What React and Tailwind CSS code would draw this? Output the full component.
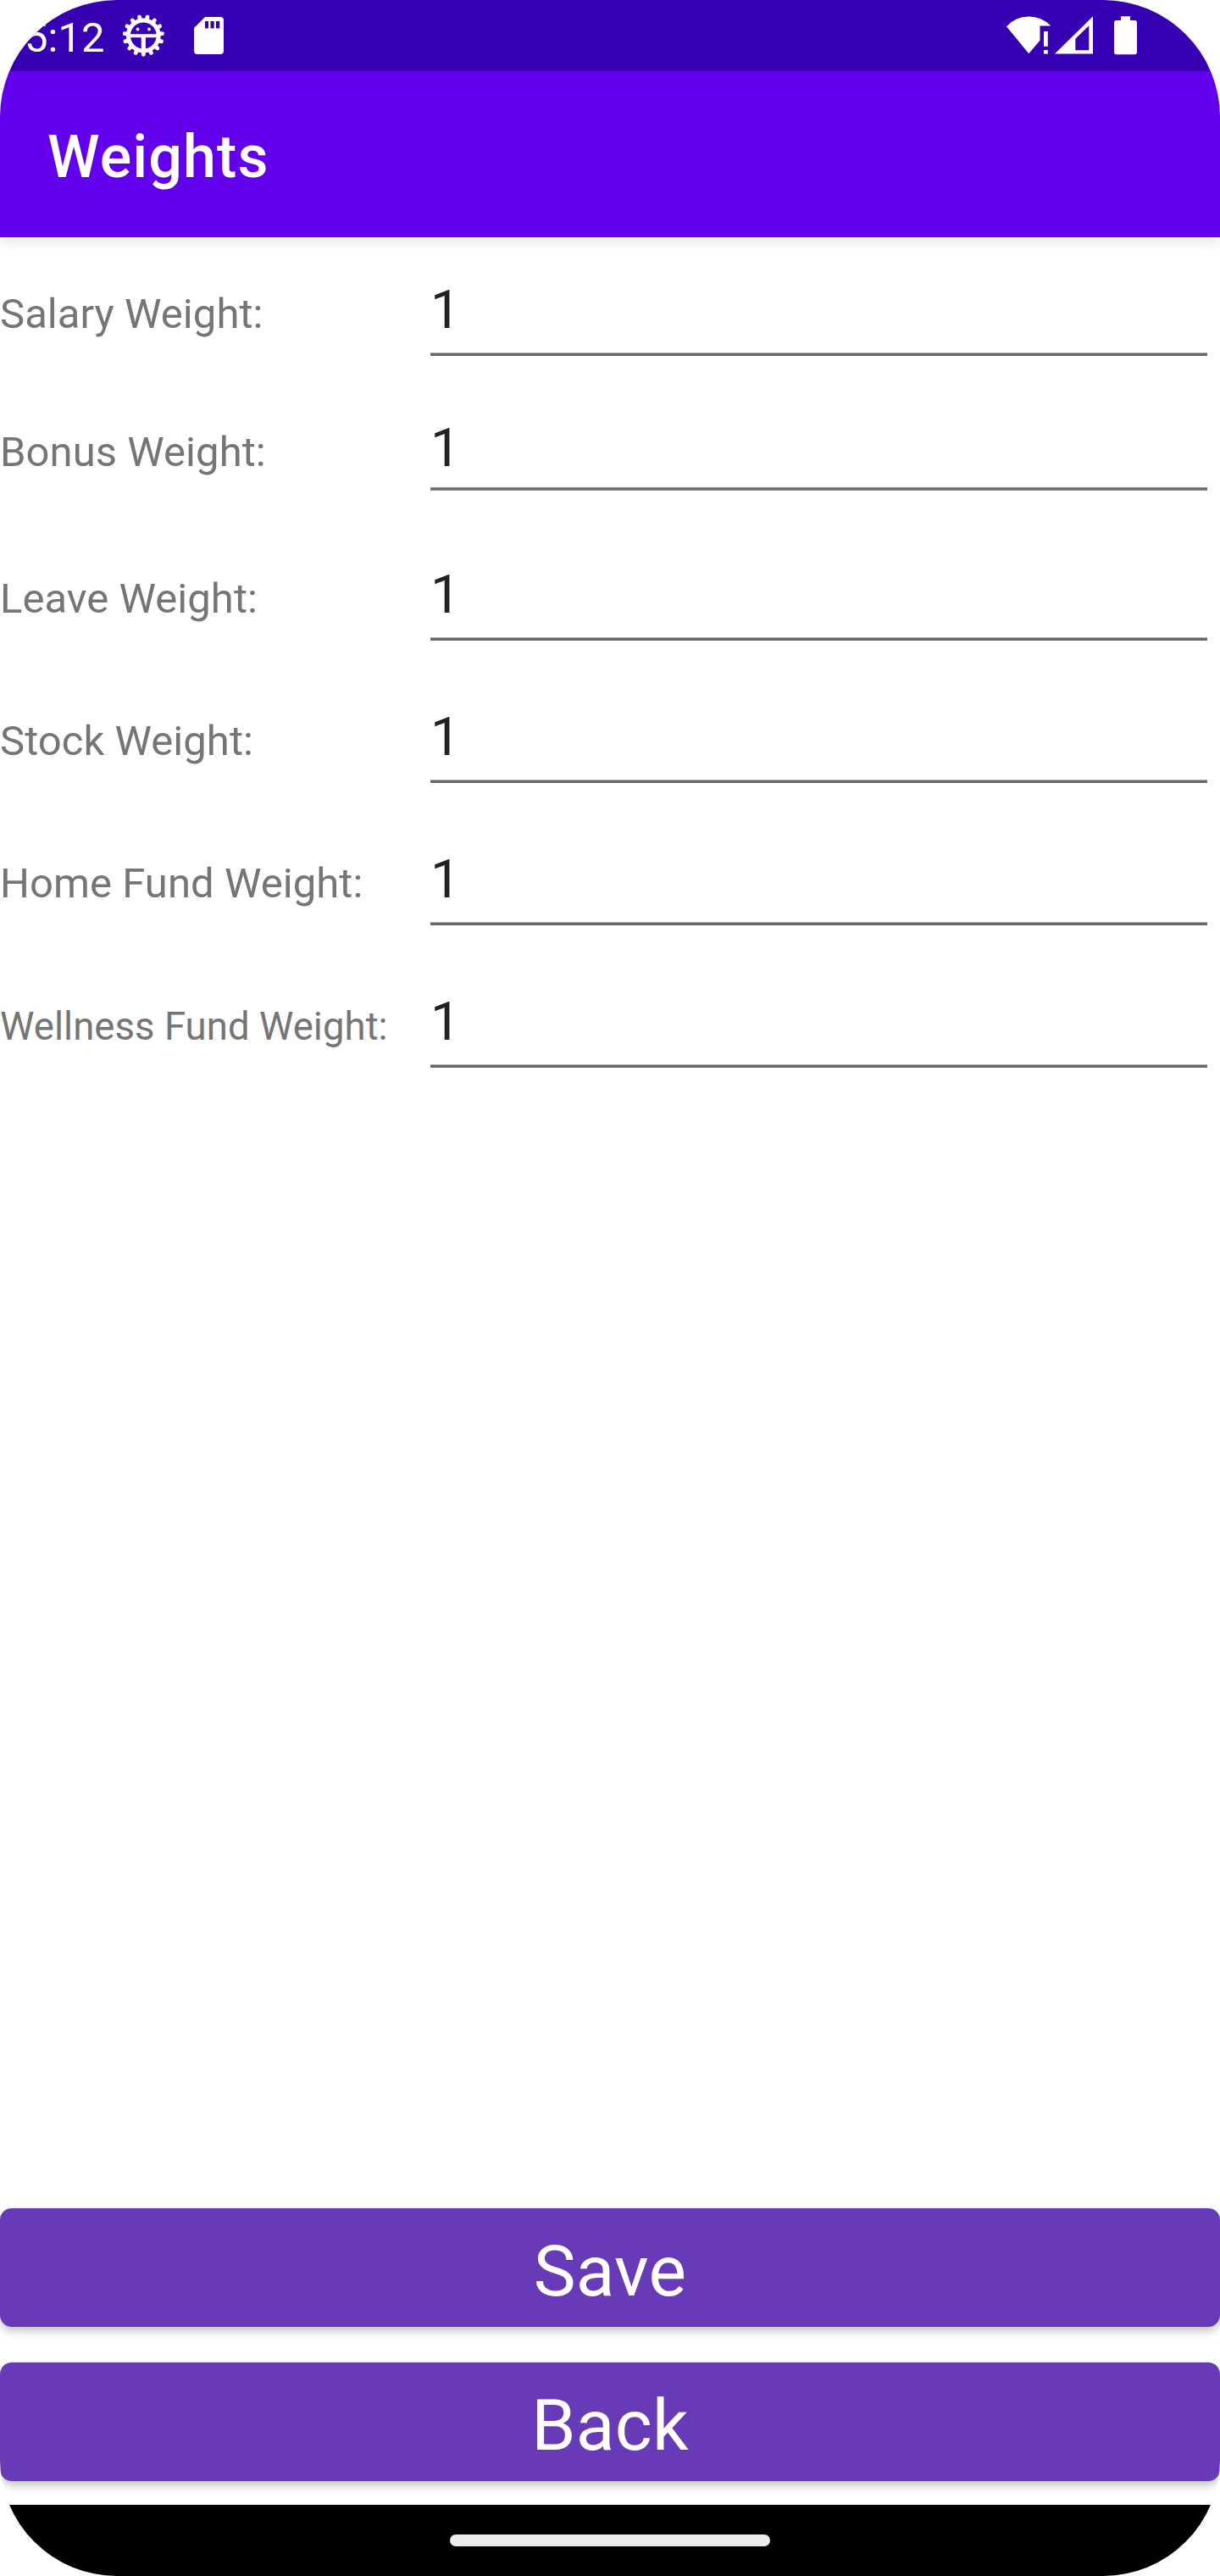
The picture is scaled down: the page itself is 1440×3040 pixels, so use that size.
const TEETH = Array.from({ length: 15 }, (_, i) => i * 24);

function DebugGearIcon() {
  return (
    <svg className="h-[52px] w-[52px]" viewBox="0 0 52 52" fill="none" stroke="white">
      <circle cx="25.3" cy="26" r="17.9" strokeWidth="5" />
      {TEETH.map((deg) => (
        <path
          key={deg}
          d="M25.3 44 V48.3"
          strokeWidth="4.8"
          strokeLinecap="round"
          transform={`rotate(${deg} 25.3 26)`}
        />
      ))}
      <path d="M8 26.3 H43" strokeWidth="4" />
      <path d="M25.3 27 V43" strokeWidth="5.2" />
      <circle cx="18.6" cy="18.5" r="1.9" fill="white" stroke="none" />
      <circle cx="32" cy="18.5" r="1.9" fill="white" stroke="none" />
    </svg>
  );
}

function SdCardIcon() {
  return (
    <svg className="ml-[33px] h-[52px] w-[35px]" viewBox="0 0 35 52" fill="white">
      <path
        fillRule="evenodd"
        d="M13 4 H31 Q35 4 35 8 V44 Q35 48 31 48 H4 Q0 48 0 44 V17 Z M13 9 V17.6 H17 V9 Z M19.5 9 V17.6 H23.7 V9 Z M26 9 V17.6 H30.2 V9 Z"
      />
    </svg>
  );
}

function WifiAlertIcon() {
  return (
    <svg className="h-[52px] w-[54px]" viewBox="0 0 54 52" fill="white">
      <path d="M0 15.3 A35.5 35.5 0 0 1 52.4 14.6 H39.5 V31.8 L26.3 47.3 Z" />
      <path d="M44 21 H48.8 V38.7 H44 Z M44 43 H48.8 V47.6 H44 Z" />
    </svg>
  );
}

function SignalIcon() {
  return (
    <svg className="ml-[3px] h-[52px] w-[45px]" viewBox="0 0 45 52" fill="white">
      <path fillRule="evenodd" d="M0 47.6 H45 V3.2 Z M24.3 29.8 L40.3 14.3 V43.3 H24.3 Z" />
    </svg>
  );
}

function BatteryIcon() {
  return (
    <svg className="ml-[25px] h-[52px] w-[27px]" viewBox="0 0 27 52" fill="white">
      <path d="M8 3.2 H19 V8 H24.3 Q27 8 27 10.7 V45.6 Q27 48.3 24.3 48.3 H2.7 Q0 48.3 0 45.6 V10.7 Q0 8 2.7 8 H8 Z" />
    </svg>
  );
}

const LABEL = "text-[49px] leading-[57px] pb-[21px]";

const ROWS = [
  { label: "Salary Weight:", row: "h-[140px]", text: LABEL },
  {
    label: "Bonus Weight:",
    row: "h-[159px]",
    text: "text-[49px] leading-[57px] pb-[17px]",
    value: "pb-[10px]",
    line: "border-y border-[#8c8c8c]",
  },
  { label: "Leave Weight:", row: "h-[177px]", text: LABEL },
  { label: "Stock Weight:", row: "h-[168px]", text: LABEL },
  { label: "Home Fund Weight:", row: "h-[168px]", text: LABEL },
  {
    label: "Wellness Fund Weight:",
    row: "h-[168px]",
    text: "text-[45.5px] leading-[53px] pb-[22px]",
  },
];

function WeightRow({ label, row, text, value = "pb-[14px]", line = "border-t border-[#b0b0b0]" }) {
  return (
    <div className={`flex items-end ${row}`}>
      <div className={`w-[508px] shrink-0 whitespace-nowrap tracking-[0.05px] text-[#757575] ${text}`}>
        {label}
      </div>
      <div className="mr-[15px] flex flex-1 flex-col">
        <div className={`text-[63px] leading-[73px] text-[#212121] ${value}`}>1</div>
        <div className={`h-[4px] bg-[#696969] ${line}`} />
      </div>
    </div>
  );
}

function ActionButton({ children }) {
  return (
    <button className="block h-[140px] w-full rounded-[14px] bg-[#673ab7] pt-[9px] text-center text-[84px] leading-[99px] tracking-[0.2px] text-white shadow-[0_5px_12px_-1px_rgba(0,0,0,0.28)]">
      {children}
    </button>
  );
}

export default function App() {
  return (
    <div className="h-[3040px] w-[1440px] bg-white">
      <div className="flex h-[3040px] w-[1440px] flex-col overflow-hidden rounded-[138px] bg-white font-['Roboto',sans-serif]">
        <div className="flex h-[84px] shrink-0 items-start bg-[#3700b3] pt-4 pr-[98px] pl-[29px] text-white">
          <div className="w-[115px] text-[49px] leading-[57px]">5:12</div>
          <DebugGearIcon />
          <SdCardIcon />
          <div className="ml-auto flex">
            <WifiAlertIcon />
            <SignalIcon />
            <BatteryIcon />
          </div>
        </div>

        <header className="h-[196px] shrink-0 bg-[#6200ee] pt-[60px] pl-14 shadow-[0_6px_14px_rgba(0,0,0,0.1)]">
          <h1 className="text-[70px] leading-[82px] font-medium tracking-[1.1px] text-white">Weights</h1>
        </header>

        <main className="flex flex-1 flex-col">
          {ROWS.map((r) => (
            <WeightRow key={r.label} {...r} />
          ))}
          <div className="mt-auto flex flex-col gap-[42px] pb-7">
            <ActionButton>Save</ActionButton>
            <ActionButton>Back</ActionButton>
          </div>
        </main>

        <nav className="flex h-[84px] shrink-0 items-start justify-center bg-black pt-[35px]">
          <div className="h-[14px] w-[378px] rounded-full bg-[#ebebeb]" />
        </nav>
      </div>
    </div>
  );
}
